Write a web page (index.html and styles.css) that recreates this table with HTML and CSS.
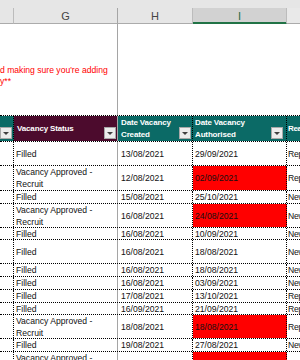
FILE: index.html
```html
<!DOCTYPE html>
<html>
<head>
<meta charset="utf-8">
<link rel="stylesheet" href="styles.css">
</head>
<body>
<div class="sheet">
  <div class="colbar">
    <div class="colhead"></div>
    <div class="colhead freeze">G</div>
    <div class="colhead">H</div>
    <div class="colhead sel">I</div>
    <div class="colhead last"></div>
  </div>

  <div class="note">
    <div class="note-lead">d making sure you're adding<br>y**</div>
    <div class="note-cell"></div>
    <div class="note-cell"></div>
    <div class="note-cell last"></div>
  </div>

  <div class="row thead">
    <div class="th f teal"><span class="dd"></span></div>
    <div class="th g maroon"><span class="label">Vacancy Status</span><span class="dd"></span></div>
    <div class="th h teal"><span class="label">Date Vacancy<br>Created</span><span class="dd"></span></div>
    <div class="th i teal"><span class="label">Date Vacancy<br>Authorised</span><span class="dd"></span></div>
    <div class="th j teal"><span class="label">Reason</span></div>
  </div>

  <div class="row h24">
    <div class="td f"></div><div class="td g">Filled</div><div class="td h">13/08/2021</div><div class="td i">29/09/2021</div><div class="td j">Replacement</div>
  </div>
  <div class="row h25">
    <div class="td f"></div><div class="td g wrap">Vacancy Approved - Recruit</div><div class="td h">12/08/2021</div><div class="td i red">02/09/2021</div><div class="td j">Replacement</div>
  </div>
  <div class="row h13">
    <div class="td f"></div><div class="td g">Filled</div><div class="td h">15/08/2021</div><div class="td i">25/10/2021</div><div class="td j">New</div>
  </div>
  <div class="row h24">
    <div class="td f"></div><div class="td g wrap">Vacancy Approved - Recruit</div><div class="td h">16/08/2021</div><div class="td i red">24/08/2021</div><div class="td j">New</div>
  </div>
  <div class="row h12">
    <div class="td f"></div><div class="td g">Filled</div><div class="td h">16/08/2021</div><div class="td i">10/09/2021</div><div class="td j">New</div>
  </div>
  <div class="row h24">
    <div class="td f"></div><div class="td g">Filled</div><div class="td h">16/08/2021</div><div class="td i">18/08/2021</div><div class="td j">New</div>
  </div>
  <div class="row h13">
    <div class="td f"></div><div class="td g">Filled</div><div class="td h">16/08/2021</div><div class="td i">18/08/2021</div><div class="td j">New</div>
  </div>
  <div class="row h13">
    <div class="td f"></div><div class="td g">Filled</div><div class="td h">16/08/2021</div><div class="td i">03/09/2021</div><div class="td j">New</div>
  </div>
  <div class="row h13">
    <div class="td f"></div><div class="td g">Filled</div><div class="td h">17/08/2021</div><div class="td i">13/10/2021</div><div class="td j">Replacement</div>
  </div>
  <div class="row h12">
    <div class="td f"></div><div class="td g">Filled</div><div class="td h">16/09/2021</div><div class="td i">21/09/2021</div><div class="td j">Replacement</div>
  </div>
  <div class="row h24">
    <div class="td f"></div><div class="td g wrap">Vacancy Approved - Recruit</div><div class="td h">18/08/2021</div><div class="td i red">18/08/2021</div><div class="td j">Replacement</div>
  </div>
  <div class="row h13">
    <div class="td f"></div><div class="td g">Filled</div><div class="td h">19/08/2021</div><div class="td i">27/08/2021</div><div class="td j">New</div>
  </div>
  <div class="row h24">
    <div class="td f"></div><div class="td g wrap">Vacancy Approved - Recruit</div><div class="td h">20/08/2021</div><div class="td i red">20/08/2021</div><div class="td j">Replacement</div>
  </div>
</div>
</body>
</html>
```

FILE: styles.css
```css
html, body {
  margin: 0;
  padding: 0;
  background: #ffffff;
  width: 300px;
  height: 360px;
  overflow: hidden;
}

body {
  font-family: "Liberation Sans", Arial, sans-serif;
}

.sheet {
  width: 300px;
}

.colbar,
.note,
.row {
  display: grid;
  grid-template-columns: 14px 104px 75px 94px 1fr;
}

/* column letter bar */
.colbar {
  height: 24px;
  padding-top: 8px;
  box-sizing: border-box;
  background: #e6e6e6;
}

.colhead {
  display: flex;
  align-items: center;
  justify-content: center;
  border-right: 1px solid #bcbcbc;
  border-bottom: 1px solid #ababab;
  font-size: 11px;
  color: #444444;
}

.colhead.freeze {
  border-right-color: #a5a5a5;
}

.colhead.sel {
  background: #d2d2d2;
  color: #1e6b41;
  border-bottom-color: #217346;
  box-shadow: inset 0 -1px 0 #217346;
}

.colhead.last {
  border-right: none;
  background: #e9e9e9;
}

/* blank area with note */
.note {
  height: 91px;
}

.note-lead {
  grid-column: 1 / 3;
  border-right: 1px solid #a5a5a5;
  padding-top: 41px;
  font-size: 8.6px;
  line-height: 11px;
  color: #ff0000;
  white-space: nowrap;
}

/* table */
.row {
  box-sizing: border-box;
  border-bottom: 1px dotted #000000;
}

.thead {
  height: 27px;
  border-top: 1px dotted #000000;
}

.h12 { height: 12px; }
.h13 { height: 13px; }
.h24 { height: 24px; }
.h25 { height: 25px; }

.th {
  display: flex;
  align-items: center;
  padding-left: 3px;
  color: #ffffff;
  font-weight: bold;
  font-size: 8px;
  letter-spacing: -0.15px;
  line-height: 12px;
  white-space: nowrap;
  overflow: hidden;
}

.teal { background: #0b6a66; }
.maroon { background: #4c0b2d; }

.th.f { padding-left: 0; }
.th.i { padding-left: 2px; }
.th.j { padding-left: 1px; letter-spacing: -0.4px; }

.label {
  flex: 1;
}

.dd {
  flex: none;
  align-self: flex-end;
  width: 12px;
  height: 12px;
  box-sizing: border-box;
  margin: 0 1px 2px auto;
  background: #ececec;
  border: 1px solid #a8a8a8;
  display: flex;
  align-items: center;
  justify-content: center;
}

.dd::after {
  content: "";
  width: 0;
  height: 0;
  margin-top: 1px;
  border-left: 3px solid transparent;
  border-right: 3px solid transparent;
  border-top: 3px solid #404040;
}

.th.i .dd { margin-right: 3px; }

.td {
  display: flex;
  align-items: center;
  padding-left: 3px;
  font-size: 8.6px;
  line-height: 12px;
  color: #111111;
  white-space: nowrap;
  overflow: hidden;
}

.f { border-right: 1px dotted #000000; }
.g { border-right: 1px solid #a5a5a5; }
.h { border-right: 1px dotted #000000; }
.i { border-right: 1px dotted #000000; }

.td.g { padding-left: 2px; }
.td.i { padding-left: 2px; }
.td.j { padding-left: 1px; letter-spacing: -0.3px; }

.td.wrap {
  white-space: normal;
}

.td.red {
  background: #ff0000;
}
```
